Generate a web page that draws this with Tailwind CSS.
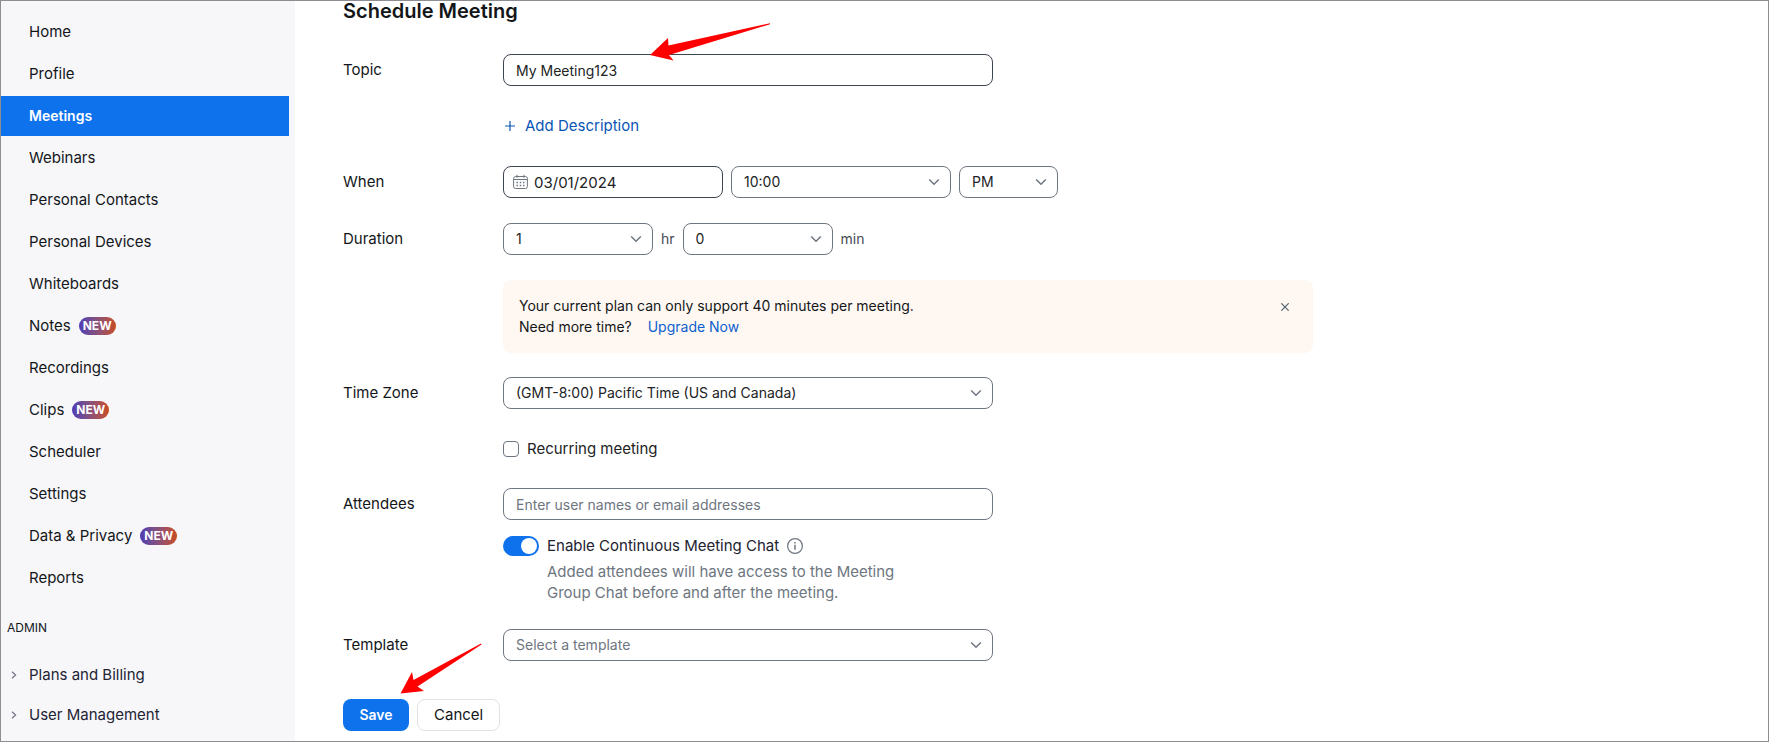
<!DOCTYPE html>
<html lang="en">
<head>
  <meta charset="UTF-8" />
  <meta name="viewport" content="width=device-width, initial-scale=1.0" />
  <title>Schedule Meeting</title>

  <!-- Tailwind CSS CDN -->
  <script src="https://cdn.jsdelivr.net/npm/@tailwindcss/browser@4"></script>
</head>

<body class="flex min-h-screen border border-[#8e8d91] bg-white font-['Inter',sans-serif] text-sm text-[#131619]">

  <!-- Shared icons -->
  <svg class="hidden">
    <symbol id="chevron" viewBox="0 0 12 8">
      <path d="M1.2 1.5 6 6.2l4.8-4.7" fill="none" stroke="currentColor" stroke-width="1.5" />
    </symbol>
    <symbol id="caret" viewBox="0 0 6 8">
      <path d="M1 .8 4.6 4 1 7.2" fill="none" stroke="currentColor" stroke-width="1.2" />
    </symbol>
  </svg>

  <!-- Sidebar -->
  <nav class="w-[294px] shrink-0 bg-[#f7f7fa] pt-[11px] pr-[6px] text-[15px]">
    <ul class="flex flex-col gap-0.5">
      <li><a href="#" class="flex h-10 items-center pl-7">Home</a></li>
      <li><a href="#" class="flex h-10 items-center pl-7">Profile</a></li>
      <li><a href="#" class="flex h-10 items-center bg-[#0e72ed] pl-7 text-sm font-semibold text-white">Meetings</a></li>
      <li><a href="#" class="flex h-10 items-center pl-7">Webinars</a></li>
      <li><a href="#" class="flex h-10 items-center pl-7">Personal Contacts</a></li>
      <li><a href="#" class="flex h-10 items-center pl-7">Personal Devices</a></li>
      <li><a href="#" class="flex h-10 items-center pl-7">Whiteboards</a></li>
      <li><a href="#" class="flex h-10 items-center gap-2 pl-7">Notes <span class="h-[18px] rounded-full bg-linear-to-r from-[#4f3ab5] to-[#c94a14] px-1 text-xs leading-[18px] font-bold text-white">NEW</span></a></li>
      <li><a href="#" class="flex h-10 items-center pl-7">Recordings</a></li>
      <li><a href="#" class="flex h-10 items-center gap-2 pl-7">Clips <span class="h-[18px] rounded-full bg-linear-to-r from-[#4f3ab5] to-[#c94a14] px-1 text-xs leading-[18px] font-bold text-white">NEW</span></a></li>
      <li><a href="#" class="flex h-10 items-center pl-7">Scheduler</a></li>
      <li><a href="#" class="flex h-10 items-center pl-7">Settings</a></li>
      <li><a href="#" class="flex h-10 items-center gap-2 pl-7">Data &amp; Privacy <span class="h-[18px] rounded-full bg-linear-to-r from-[#4f3ab5] to-[#c94a14] px-1 text-xs leading-[18px] font-bold text-white">NEW</span></a></li>
      <li><a href="#" class="flex h-10 items-center pl-7">Reports</a></li>
    </ul>

    <h2 class="mt-5 pl-1.5 text-xs leading-5">ADMIN</h2>
    <ul class="mt-[17px]">
      <li><a href="#" class="flex h-10 items-center gap-3 pl-[10px] text-[#232333]"><svg class="h-2 w-1.5 text-[#747487]"><use href="#caret" /></svg>Plans and Billing</a></li>
      <li><a href="#" class="flex h-10 items-center gap-3 pl-[10px] text-[#232333]"><svg class="h-2 w-1.5 text-[#747487]"><use href="#caret" /></svg>User Management</a></li>
    </ul>
  </nav>

  <!-- Meeting form -->
  <main class="min-w-0 flex-1 px-12">
    <h1 class="text-xl leading-5 font-semibold">Schedule Meeting</h1>

    <form>
      <div class="mt-[33px] flex items-center">
        <label for="topic" class="w-40 shrink-0 text-[15px]">Topic</label>
        <div class="relative w-full max-w-[490px]">
          <input id="topic" type="text" value="My Meeting123" class="block h-8 w-full rounded-lg border border-[#3d4551] px-3 text-[#222325]" />
          <!-- Arrow to the topic -->
          <svg class="pointer-events-none absolute -top-8 left-[146px] h-10 w-[122px]" viewBox="0 0 122 40" fill="#f00">
            <path d="M1 33 19 16l.5 7.5L121 1.2v1L20 33l4.5 5.5z" />
          </svg>
        </div>
      </div>

      <div class="mt-6 flex h-8 items-center pl-40">
        <button type="button" class="flex items-center gap-2.5 pl-0.5 text-[15px] text-[#0956b5]">
          <svg class="size-2.5" viewBox="0 0 10 10" fill="none" stroke="currentColor" stroke-width="1.2"><path d="M5 0v10M0 5h10" /></svg>
          Add Description
        </button>
      </div>

      <div class="mt-6 flex items-center">
        <label for="date" class="w-40 shrink-0 text-[15px]">When</label>
        <div class="flex gap-2">
          <div class="relative">
            <input id="date" type="text" value="03/01/2024" class="block h-8 w-[220px] rounded-lg border border-[#3d4551] pr-3 pl-[30px] text-[15px] text-[#222325]" />
            <svg class="absolute top-2 left-2.5 h-4 w-[15px] text-[#6e7680]" viewBox="0 0 15 16" fill="none" stroke="currentColor">
              <rect x=".6" y="2.5" width="13.8" height="12" rx="2" />
              <path d="M.6 5.5h13.8M4 .8v3M11 .8v3" />
              <path d="M3.5 8.5H5M6.75 8.5h1.5M10 8.5h1.5M3.5 11.5H5M6.75 11.5h1.5M10 11.5h1.5" stroke-width="1.5" />
            </svg>
          </div>
          <div class="relative">
            <select aria-label="Start time" class="block h-8 w-[220px] appearance-none rounded-lg border border-[#6e7680] px-3 text-[#222325]"><option>10:00</option></select>
            <svg class="pointer-events-none absolute top-3 right-[11px] h-2 w-3 text-[#6e7680]"><use href="#chevron" /></svg>
          </div>
          <div class="relative">
            <select aria-label="AM or PM" class="block h-8 w-[99px] appearance-none rounded-lg border border-[#6e7680] px-3 text-[#222325]"><option>PM</option></select>
            <svg class="pointer-events-none absolute top-3 right-[11px] h-2 w-3 text-[#6e7680]"><use href="#chevron" /></svg>
          </div>
        </div>
      </div>

      <div class="mt-[25px] flex items-center">
        <label for="hours" class="w-40 shrink-0 text-[15px]">Duration</label>
        <div class="flex items-center gap-2 text-[#444b53]">
          <div class="relative">
            <select id="hours" class="block h-8 w-[150px] appearance-none rounded-lg border border-[#6e7680] px-3 text-[#222325]"><option>1</option></select>
            <svg class="pointer-events-none absolute top-3 right-[11px] h-2 w-3 text-[#6e7680]"><use href="#chevron" /></svg>
          </div>
          <span>hr</span>
          <div class="relative">
            <select aria-label="Minutes" class="block h-8 w-[150px] appearance-none rounded-lg border border-[#6e7680] px-3 text-[#222325]"><option>0</option></select>
            <svg class="pointer-events-none absolute top-3 right-[11px] h-2 w-3 text-[#6e7680]"><use href="#chevron" /></svg>
          </div>
          <span>min</span>
        </div>
      </div>

      <!-- Plan limit notice -->
      <div class="mt-[25px] ml-40 flex max-w-[810px] items-start justify-between rounded-lg bg-[#fff8f2] px-4 pt-[15px] pb-4">
        <p class="leading-[21px]">
          Your current plan can only support 40 minutes per meeting.<br />
          Need more time? <a href="#" class="ml-3 text-[#0e5fcf]">Upgrade Now</a>
        </p>
        <button type="button" aria-label="Close" class="mt-2 mr-2">
          <svg class="size-2 text-[#52606d]" viewBox="0 0 8 8" fill="none" stroke="currentColor" stroke-width="1.2"><path d="m.3.3 7.4 7.4M7.7.3.3 7.7" /></svg>
        </button>
      </div>

      <div class="mt-6 flex items-center">
        <label for="timezone" class="w-40 shrink-0 text-[15px]">Time Zone</label>
        <div class="relative w-full max-w-[490px]">
          <select id="timezone" class="block h-8 w-full appearance-none rounded-lg border border-[#6e7680] px-3 text-[#222325]"><option>(GMT-8:00) Pacific Time (US and Canada)</option></select>
          <svg class="pointer-events-none absolute top-3 right-[11px] h-2 w-3 text-[#6e7680]"><use href="#chevron" /></svg>
        </div>
      </div>

      <div class="mt-6 flex h-8 items-center gap-2 pl-40">
        <input id="recurring" type="checkbox" class="size-4 appearance-none rounded border border-[#6e7680] checked:bg-[#0e72ed]" />
        <label for="recurring" class="text-[15px] text-[#222325]">Recurring meeting</label>
      </div>

      <div class="mt-[23px] flex items-center">
        <label for="attendees" class="w-40 shrink-0 text-[15px]">Attendees</label>
        <input id="attendees" type="text" placeholder="Enter user names or email addresses" class="h-8 w-full max-w-[490px] rounded-lg border border-[#6e7680] px-3 placeholder:text-[#6e7680]" />
      </div>

      <div class="mt-4 flex items-center gap-2 pl-40">
        <input id="chat" type="checkbox" role="switch" checked class="h-5 w-9 appearance-none rounded-full bg-[#6e7680] p-0.5 before:block before:size-4 before:rounded-full before:bg-white checked:bg-[#0e72ed] checked:before:translate-x-4" />
        <label for="chat" class="text-[15px] leading-5 text-[#222230]">Enable Continuous Meeting Chat</label>
        <svg class="size-4 text-[#6e7680]" viewBox="0 0 16 16" fill="none" stroke="currentColor">
          <circle cx="8" cy="8" r="7.4" stroke-width="1.2" />
          <path d="M8 6.8v5M8 4v1.6" stroke-width="1.5" />
        </svg>
      </div>
      <p class="mt-[5px] ml-[204px] max-w-[350px] text-[15px] leading-[21px] text-[#6e7680]">
        Added attendees will have access to the Meeting Group Chat before and after the meeting.
      </p>

      <div class="mt-[26px] flex items-center">
        <label for="template" class="w-40 shrink-0 text-[15px]">Template</label>
        <div class="relative w-full max-w-[490px]">
          <select id="template" class="block h-8 w-full appearance-none rounded-lg border border-[#6e7680] px-3 text-[#6e7680]"><option>Select a template</option></select>
          <svg class="pointer-events-none absolute top-3 right-[11px] h-2 w-3 text-[#6e7680]"><use href="#chevron" /></svg>
        </div>
      </div>

      <div class="relative mt-[38px] flex gap-2">
        <button type="submit" class="h-8 min-w-[66px] rounded-lg bg-[#0e72ed] px-4 font-semibold text-white">Save</button>
        <button type="button" class="h-8 rounded-lg border border-[#dfe3e8] px-4 text-[15px]">Cancel</button>
        <!-- Arrow to the save button -->
        <svg class="pointer-events-none absolute -top-14 left-14 h-[52px] w-[84px]" viewBox="0 0 84 52" fill="#f00">
          <path d="M1.5 50.5 13 29l1.5 8L82 .5l.5 1-64 42 6.500 4.500z" />
        </svg>
      </div>
    </form>
  </main>

</body>
</html>
